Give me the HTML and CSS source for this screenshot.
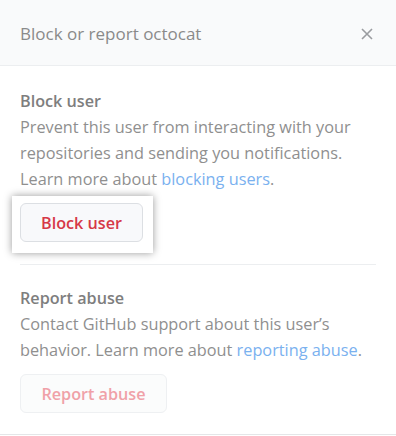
FILE: index.html
```html
<!DOCTYPE html>
<html>
<head>
<meta charset="utf-8">
<link rel="stylesheet" href="styles.css">
</head>
<body>
<div class="dialog">
  <div class="header">
    <span class="title">Block or report octocat</span>
    <svg class="close" width="14" height="14" viewBox="0 0 14 14"><path d="M2 2 L12 12 M12 2 L2 12" stroke="#9a9ca0" stroke-width="1.6" fill="none"/></svg>
  </div>
  <div class="body">
    <div class="section">
      <h3 class="heading">Block user</h3>
      <p class="text">Prevent this user from interacting with your repositories and sending you notifications. Learn more about <a class="link">blocking users</a>.</p>
      <div class="highlight"><button class="btn btn-block">Block user</button></div>
    </div>
    <div class="divider"></div>
    <div class="section">
      <h3 class="heading">Report abuse</h3>
      <p class="text">Contact GitHub support about this user’s behavior. Learn more about <a class="link">reporting abuse</a>.</p>
      <button class="btn btn-report">Report abuse</button>
    </div>
  </div>
</div>
</body>
</html>
```
FILE: styles.css
```css
html, body {
  margin: 0;
  padding: 0;
  background: #ffffff;
}
body {
  font-family: "Open Sans", "Noto Sans", sans-serif;
  width: 396px;
  height: 436px;
  overflow: hidden;
}
.dialog {
  width: 396px;
  height: 435px;
  border-bottom: 1px solid #e4e6e8;
  box-sizing: border-box;
}
.header {
  height: 66px;
  box-sizing: border-box;
  background: #f9fafb;
  border-bottom: 1px solid #eceef0;
  display: flex;
  align-items: center;
  justify-content: space-between;
  padding: 0 22px 0 20px;
}
.title {
  font-size: 17px;
  color: #8a8a8a;
  margin-top: 2px;
}
.close {
  display: block;
  margin-top: 2px;
}
.body {
  padding: 22px 20px 0 20px;
}
.heading {
  margin: 0;
  font-size: 16.2px;
  font-weight: 600;
  line-height: 26px;
  color: #7e7e7e;
}
.text {
  margin: 0;
  font-size: 16.3px;
  line-height: 26px;
  color: #8f8f8f;
}
.link {
  color: #7ab1ef;
}
.highlight {
  display: inline-block;
  background: #ffffff;
  padding: 7px 10px 11px 8px;
  margin: 4px 0 0 -8px;
  box-shadow: 0 0 8px rgba(0, 0, 0, 0.4);
}
.btn {
  display: block;
  height: 39px;
  box-sizing: border-box;
  border-radius: 6px;
  font-family: "Open Sans", "Noto Sans", sans-serif;
  font-size: 16.2px;
  font-weight: 600;
  padding: 0;
  white-space: nowrap;
  text-align: center;
}
.btn-block {
  width: 123px;
  background: #f8f9fb;
  border: 1px solid #dcdfe3;
  color: #d63847;
}
.btn-report {
  width: 147px;
  margin-top: 11px;
  background: #fbfcfc;
  border: 1px solid #eef0f2;
  color: #f0a1a8;
}
.divider {
  height: 1px;
  background: #eceef0;
  margin-top: 11px;
  margin-bottom: 20px;
}
```
